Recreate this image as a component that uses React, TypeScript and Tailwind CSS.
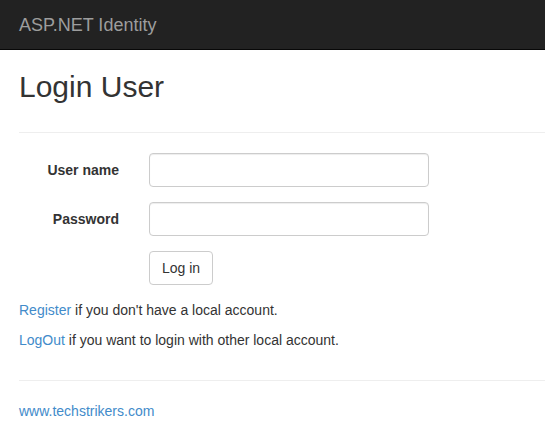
import React from 'react';

export default function App() {
	return (
		<div className="min-h-screen bg-white text-[14px] leading-[20px] text-[#333] font-['Liberation_Sans',Arial,sans-serif]">
			<nav className="h-[50px] bg-[#222] border-b border-[#080808] flex items-center pl-[19px]">
				<span className="text-[18px] leading-[20px] text-[#9d9d9d]">ASP.NET Identity</span>
			</nav>
			<div className="pl-[19px]">
				<h2 className="mt-[20px] mb-[10px] text-[30px] leading-[33px] font-normal">Login User</h2>
				<hr className="mt-[29px] mb-[20px] border-0 border-t border-[#eee]" />
				<form className="flex flex-col gap-[15px]" onSubmit={(e) => e.preventDefault()}>
					<div className="flex gap-[30px]">
						<label className="w-[100px] pt-[7px] text-right font-bold">User name</label>
						<input
							type="text"
							className="w-[280px] h-[34px] px-3 rounded-[4px] border border-[#ccc] shadow-[inset_0_1px_1px_rgba(0,0,0,0.075)] outline-none"
						/>
					</div>
					<div className="flex gap-[30px]">
						<label className="w-[100px] pt-[7px] text-right font-bold">Password</label>
						<input
							type="password"
							className="w-[280px] h-[34px] px-3 rounded-[4px] border border-[#ccc] shadow-[inset_0_1px_1px_rgba(0,0,0,0.075)] outline-none"
						/>
					</div>
					<div className="flex pl-[130px]">
						<button
							type="submit"
							className="h-[34px] w-[64px] rounded-[4px] border border-[#ccc] bg-white text-[#333]"
						>
							Log in
						</button>
					</div>
				</form>
				<p className="mt-[15px] mb-[10px]">
					<a href="#" className="text-[#428bca]">Register</a> if you don't have a local account.
				</p>
				<p className="mb-[10px]">
					<a href="#" className="text-[#428bca]">LogOut</a> if you want to login with other local account.
				</p>
				<hr className="mt-[30px] mb-[20px] border-0 border-t border-[#eee]" />
				<footer>
					<p>
						<a href="#" className="text-[#428bca]">www.techstrikers.com</a>
					</p>
				</footer>
			</div>
		</div>
	);
}
